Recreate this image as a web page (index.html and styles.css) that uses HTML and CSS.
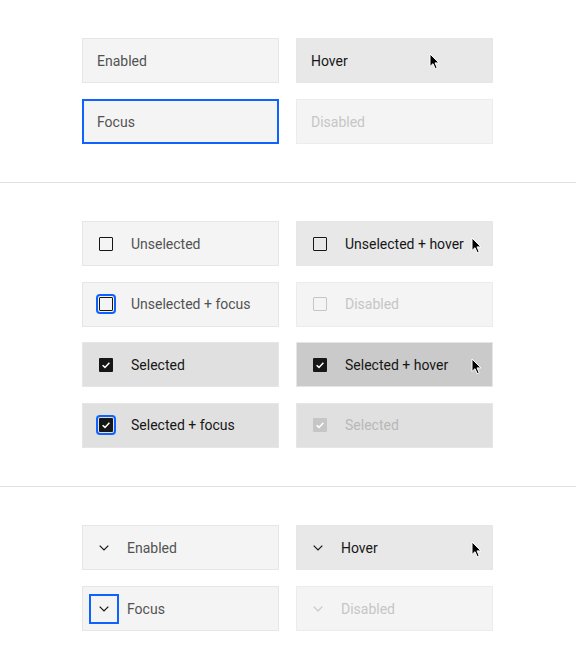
FILE: index.html
```html
<!DOCTYPE html>
<html>
<head>
<meta charset="utf-8">
<link rel="stylesheet" href="styles.css">
</head>
<body>
<section class="section">
  <div class="grid">
    <div class="cell field"><span class="label muted">Enabled</span></div>
    <div class="cell field hover"><span class="label strong">Hover</span><svg class="cursor" viewBox="0 0 11 17" width="11" height="17"><path d="M1 1 L1 13.5 L4 10.7 L6.2 15.6 L8.2 14.7 L6 9.9 L10 9.9 Z" fill="#000" stroke="#fff" stroke-width="1" stroke-linejoin="round"/></svg></div>
    <div class="cell field focus"><span class="label muted">Focus</span></div>
    <div class="cell field disabled"><span class="label dis">Disabled</span></div>
  </div>
</section>
<hr class="divider">
<section class="section middle">
  <div class="grid">
    <div class="cell check"><span class="box"></span><span class="label muted">Unselected</span></div>
    <div class="cell check hover"><span class="box"></span><span class="label strong">Unselected + hover</span><svg class="cursor" viewBox="0 0 11 17" width="11" height="17"><path d="M1 1 L1 13.5 L4 10.7 L6.2 15.6 L8.2 14.7 L6 9.9 L10 9.9 Z" fill="#000" stroke="#fff" stroke-width="1" stroke-linejoin="round"/></svg></div>
    <div class="cell check"><span class="box ring"></span><span class="label muted">Unselected + focus</span></div>
    <div class="cell check disabled"><span class="box box-dis"></span><span class="label dis">Disabled</span></div>
    <div class="cell check selected"><span class="box on"><svg viewBox="0 0 14 14" width="14" height="14"><path d="M3.6 7.2 L6 9.4 L10.4 4.8" fill="none" stroke="#fff" stroke-width="1.5"/></svg></span><span class="label strong">Selected</span></div>
    <div class="cell check selected-hover"><span class="box on"><svg viewBox="0 0 14 14" width="14" height="14"><path d="M3.6 7.2 L6 9.4 L10.4 4.8" fill="none" stroke="#fff" stroke-width="1.5"/></svg></span><span class="label strong">Selected + hover</span><svg class="cursor" viewBox="0 0 11 17" width="11" height="17"><path d="M1 1 L1 13.5 L4 10.7 L6.2 15.6 L8.2 14.7 L6 9.9 L10 9.9 Z" fill="#000" stroke="#fff" stroke-width="1" stroke-linejoin="round"/></svg></div>
    <div class="cell check selected"><span class="box on ring"><svg viewBox="0 0 14 14" width="14" height="14"><path d="M3.6 7.2 L6 9.4 L10.4 4.8" fill="none" stroke="#fff" stroke-width="1.5"/></svg></span><span class="label strong">Selected + focus</span></div>
    <div class="cell check selected-dis"><span class="box on-dis"><svg viewBox="0 0 14 14" width="14" height="14"><path d="M3.6 7.2 L6 9.4 L10.4 4.8" fill="none" stroke="#fff" stroke-width="1.5"/></svg></span><span class="label dis2">Selected</span></div>
  </div>
</section>
<hr class="divider">
<section class="section">
  <div class="grid">
    <div class="cell drop"><span class="chev"><svg viewBox="0 0 10 6" width="10" height="6"><path d="M0.7 0.7 L5 5 L9.3 0.7" fill="none" stroke="#161616" stroke-width="1.2"/></svg></span><span class="label muted">Enabled</span></div>
    <div class="cell drop hover"><span class="chev"><svg viewBox="0 0 10 6" width="10" height="6"><path d="M0.7 0.7 L5 5 L9.3 0.7" fill="none" stroke="#161616" stroke-width="1.2"/></svg></span><span class="label strong">Hover</span><svg class="cursor" viewBox="0 0 11 17" width="11" height="17"><path d="M1 1 L1 13.5 L4 10.7 L6.2 15.6 L8.2 14.7 L6 9.9 L10 9.9 Z" fill="#000" stroke="#fff" stroke-width="1" stroke-linejoin="round"/></svg></div>
    <div class="cell drop"><span class="chev chev-focus"><svg viewBox="0 0 10 6" width="10" height="6"><path d="M0.7 0.7 L5 5 L9.3 0.7" fill="none" stroke="#161616" stroke-width="1.2"/></svg></span><span class="label muted">Focus</span></div>
    <div class="cell drop disabled"><span class="chev"><svg viewBox="0 0 10 6" width="10" height="6"><path d="M0.7 0.7 L5 5 L9.3 0.7" fill="none" stroke="#c6c6c6" stroke-width="1.2"/></svg></span><span class="label dis">Disabled</span></div>
  </div>
</section>
</body>
</html>
```
FILE: styles.css
```css
html, body {
  margin: 0;
  padding: 0;
  background: #ffffff;
}
body {
  font-family: Roboto, "Noto Sans", sans-serif;
  font-size: 14px;
}
.section {
  padding: 38px 0;
}
.section.middle {
  padding-bottom: 38.5px;
}
.divider {
  margin: 0;
  border: 0;
  height: 1px;
  background: #e0e0e0;
}
.grid {
  width: 411px;
  margin: 0 0 0 82px;
  display: grid;
  grid-template-columns: 197px 197px;
  column-gap: 17px;
  row-gap: 16px;
}
.middle .grid {
  row-gap: 15.5px;
}
.cell {
  position: relative;
  box-sizing: border-box;
  height: 45px;
  background: #f4f4f4;
  border: 1px solid #e6e6e6;
  display: flex;
  align-items: center;
}
.cell.hover { background: #e8e8e8; }
.cell.selected { background: #e0e0e0; }
.cell.selected-hover { background: #cacaca; }
.cell.selected-dis { background: #e0e0e0; }
.cell.disabled { background: #f4f4f4; border-color: #ececec; }
.field { padding-left: 14px; }
.field.focus {
  border: 2px solid #0f62fe;
  padding-left: 13px;
}
.label {
  line-height: 18px;
}
.muted { color: #525252; }
.strong { color: #161616; }
.dis { color: #c6c6c6; }
.dis2 { color: #b8b8b8; }
.cursor {
  position: absolute;
  top: 15px;
  right: 10px;
}
.field .cursor { right: 52px; top: 14px; }
.check { padding-left: 16px; }
.box {
  box-sizing: border-box;
  width: 14px;
  height: 14px;
  border: 1.5px solid #161616;
  border-radius: 1px;
  margin-right: 18px;
  flex: none;
  display: flex;
  align-items: center;
  justify-content: center;
}
.box svg { display: block; flex: none; }
.box.ring { outline: 2px solid #0f62fe; outline-offset: 1px; }
.box.box-dis { border-color: #c6c6c6; }
.box.on { background: #161616; border: none; }
.box.on-dis { background: #c6c6c6; border: none; }
.drop { padding-left: 6px; }
.chev {
  box-sizing: border-box;
  width: 30px;
  height: 30px;
  border: 2px solid transparent;
  display: flex;
  align-items: center;
  justify-content: center;
  margin-right: 8px;
  flex: none;
}
.chev svg { display: block; }
.chev-focus { border-color: #0f62fe; }
```
